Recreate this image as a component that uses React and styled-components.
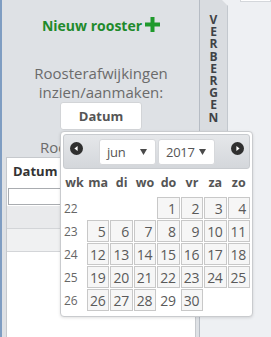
import React from "react";
import styled, { createGlobalStyle } from "styled-components";

const GlobalStyle = createGlobalStyle`
  html, body {
    margin: 0;
    padding: 0;
  }
  body {
    font-family: "Open Sans", "Liberation Sans", sans-serif;
    background: #eef0f3;
    overflow: hidden;
  }
`;

const Page = styled.div`
  position: relative;
  display: flex;
  width: 271px;
  height: 337px;
  overflow: hidden;
  background: #eef0f3;
`;

const Sidebar = styled.aside`
  box-sizing: border-box;
  width: 200px;
  height: 100%;
  display: flex;
  flex-direction: column;
  padding: 0 3px 0 4px;
  background: #dee1e5;
  border-left: 2px solid #7f9dc2;
  border-right: 1px solid #b6bcc4;
`;

const Title = styled.div`
  margin-top: 16px;
  line-height: 19px;
  font-size: 14px;
  font-weight: 700;
  color: #1f8a2c;
  text-align: center;

  svg {
    margin-left: 3px;
    vertical-align: -1px;
  }
`;

const Subtitle = styled.div`
  margin-top: ${(p) => p.$top}px;
  font-size: 15px;
  line-height: 19px;
  color: #6b6b6b;
  text-align: center;
  white-space: nowrap;
`;

const DateButton = styled.button`
  box-sizing: border-box;
  width: 82px;
  height: 28px;
  margin: 0 auto;
  background: #fff;
  border: 1px solid #d2d4d7;
  border-radius: 3px;
  font-family: inherit;
  font-size: 13px;
  font-weight: 700;
  color: #555;
`;

const Table = styled.div`
  flex: 1;
  display: flex;
  flex-direction: column;
  background: #fff;
  border: 1px solid #c6c9cd;
  border-bottom: none;
`;

const HeadCell = styled.div`
  height: 29px;
  line-height: 27px;
  padding-left: 6px;
  font-size: 13px;
  font-weight: 700;
  color: #333;
`;

const FilterRow = styled.div`
  padding: 1px;
`;

const FilterInput = styled.div`
  box-sizing: border-box;
  width: 180px;
  height: 17px;
  border: 1px solid #a9acb0;
  background: #fff;
`;

const BodyRow = styled.div`
  height: 22px;
  background: ${(p) => p.$bg};
  border-bottom: 1px solid #d3d5d8;
`;

const Tab = styled.div`
  box-sizing: border-box;
  width: 28px;
  height: 140px;
  padding-top: 14px;
  display: flex;
  justify-content: center;
  background: #d9dce0;
  border-right: 1px solid #c3c8ce;
  clip-path: polygon(0 0, calc(100% - 6px) 0, 100% 6px, 100% 100%, 0 100%);
`;

const TabLabel = styled.div`
  width: 12px;
  word-break: break-all;
  text-align: center;
  font-size: 12px;
  font-weight: 700;
  line-height: 12.2px;
  color: #3f4246;
`;

const Main = styled.main`
  flex: 1;
  height: 100%;
`;

const TopBox = styled.div`
  height: 1px;
  margin-left: 12px;
  background: #fff;
  border: 1px solid #d4d7db;
  border-top: none;
`;

const Picker = styled.div`
  position: absolute;
  left: 60px;
  top: 131px;
  box-sizing: border-box;
  width: 193px;
  height: 186px;
  padding: 2px;
  background: #fff;
  border: 1px solid #c9cbce;
  border-radius: 4px;
  box-shadow: 0 1px 3px rgba(0, 0, 0, 0.12);
`;

const PickerHeader = styled.div`
  box-sizing: border-box;
  height: 35px;
  display: flex;
  align-items: center;
  padding: 0 5px 0 6px;
  background: linear-gradient(#e5e7ea, #d4d7db);
  border: 1px solid #c8cbcf;
  border-radius: 3px;
`;

const NavIcon = styled.svg`
  align-self: flex-start;
  margin-top: 7px;
  flex: none;
`;

const Select = styled.div`
  box-sizing: border-box;
  width: 57px;
  height: 26px;
  margin-left: ${(p) => p.$gap}px;
  display: flex;
  align-items: center;
  justify-content: space-between;
  padding: 0 8px 0 7px;
  background: #fff;
  border: 1px solid #d6d8db;
  border-radius: 3px;
  font-size: 13px;
  letter-spacing: -0.3px;
  color: #555;
`;

const Caret = styled.svg`
  flex: none;
`;

const Spacer = styled.div`
  flex: 1;
`;

const Grid = styled.div`
  display: grid;
  grid-template-columns: 23px repeat(7, 1fr);
  grid-template-rows: 27px repeat(5, 22px);
  gap: 1px;
`;

const DayName = styled.div`
  display: flex;
  align-items: center;
  justify-content: center;
  font-size: 12.5px;
  font-weight: 700;
  color: #555;
`;

const WeekNo = styled.div`
  display: flex;
  align-items: center;
  padding-left: 1px;
  font-size: 12px;
  color: #666;
`;

const Day = styled.div`
  box-sizing: border-box;
  display: flex;
  align-items: center;
  justify-content: flex-end;
  padding-right: 3px;
  font-size: 14px;
  letter-spacing: -0.3px;
  color: #5a5a5a;
  background: ${(p) => (p.$plain ? "transparent" : "#f6f6f6")};
  border: 1px solid ${(p) => (p.$plain ? "transparent" : "#c8c8c8")};
`;

const dayNames = ["wk", "ma", "di", "wo", "do", "vr", "za", "zo"];

const weeks = [
  [22, [null, null, null, 1, 2, 3, 4]],
  [23, [5, 6, 7, 8, 9, 10, 11]],
  [24, [12, 13, 14, 15, 16, 17, 18]],
  [25, [19, 20, 21, 22, 23, 24, 25]],
  [26, [26, 27, 28, 29, 30, null, null]],
];

function Arrow({ dir }) {
  const points = dir === "left" ? "7.6,4 4.4,6.5 7.6,9" : "5.4,4 8.6,6.5 5.4,9";
  return (
    <NavIcon width="13" height="13" viewBox="0 0 13 13">
      <circle cx="6.5" cy="6.5" r="6.5" fill="#2f2f2f" />
      <polygon points={points} fill="#fff" />
    </NavIcon>
  );
}

function Down() {
  return (
    <Caret width="7" height="6" viewBox="0 0 7 6">
      <polygon points="0,0 7,0 3.5,6" fill="#4a4a4a" />
    </Caret>
  );
}

function Plus() {
  return (
    <svg width="15" height="15" viewBox="0 0 15 15">
      <path d="M5.5 0h4v5.5H15v4H9.5V15h-4V9.5H0v-4h5.5z" fill="#1f9a2c" />
    </svg>
  );
}

export default function App() {
  return (
    <>
      <GlobalStyle />
      <Page>
        <Sidebar>
          <Title>
            Nieuw rooster
            <Plus />
          </Title>
          <Subtitle $top={29}>
            Roosterafwijkingen
            <br />
            inzien/aanmaken:
          </Subtitle>
          <DateButton>Datum</DateButton>
          <Subtitle $top={8}>Roosteroverzicht:</Subtitle>
          <Table>
            <HeadCell>Datum</HeadCell>
            <FilterRow>
              <FilterInput />
            </FilterRow>
            <BodyRow $bg="#e9eaec" />
            <BodyRow $bg="#f0f1f2" />
          </Table>
        </Sidebar>
        <Tab>
          <TabLabel>VERBERGEN</TabLabel>
        </Tab>
        <Main>
          <TopBox />
        </Main>

        <Picker>
          <PickerHeader>
            <Arrow dir="left" />
            <Select $gap={16}>
              jun
              <Down />
            </Select>
            <Select $gap={2}>
              2017
              <Down />
            </Select>
            <Spacer />
            <Arrow dir="right" />
          </PickerHeader>
          <Grid>
            {dayNames.map((d) => (
              <DayName key={d}>{d}</DayName>
            ))}
            {weeks.map(([wk, days]) => (
              <React.Fragment key={wk}>
                <WeekNo>{wk}</WeekNo>
                {days.map((d, i) =>
                  d === null ? (
                    <div key={i} />
                  ) : (
                    <Day key={i} $plain={d === 29}>
                      {d}
                    </Day>
                  )
                )}
              </React.Fragment>
            ))}
          </Grid>
        </Picker>
      </Page>
    </>
  );
}
